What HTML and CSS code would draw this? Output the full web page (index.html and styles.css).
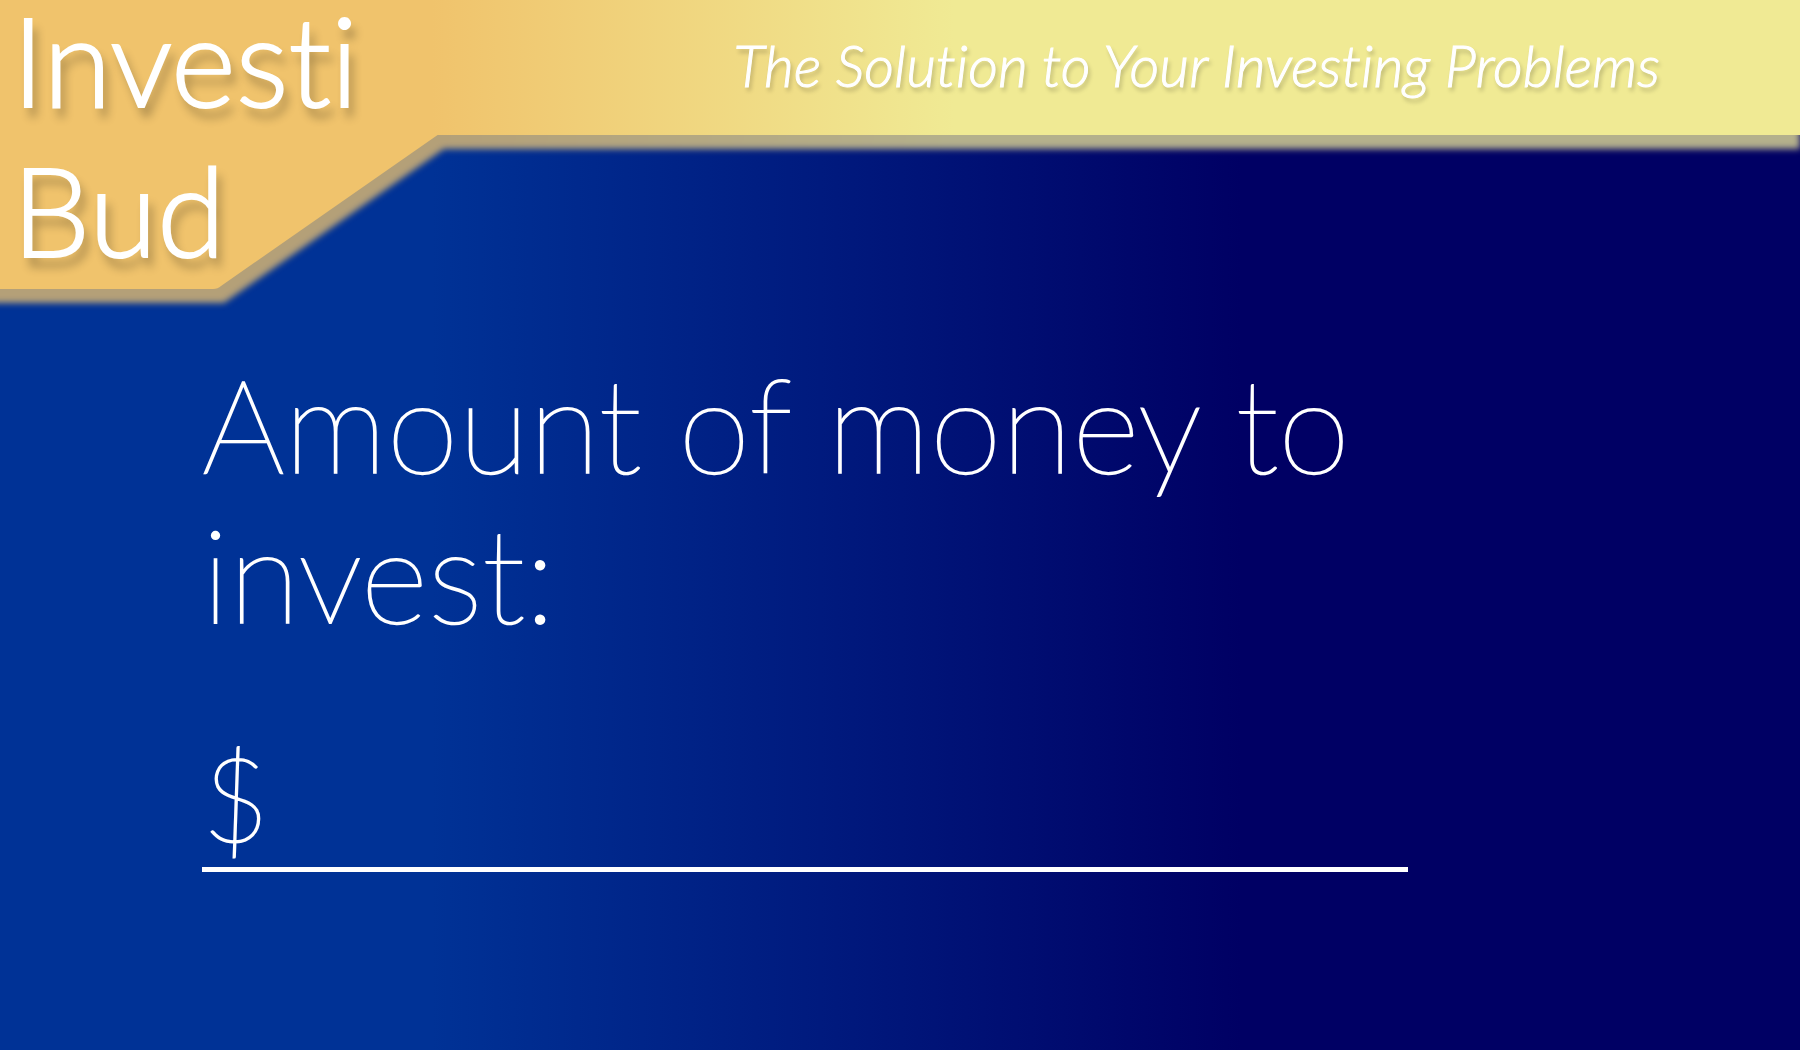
FILE: index.html
```html
<!DOCTYPE html>
<html lang="en">
<head>
<meta charset="utf-8">
<title>Investi Bud</title>
<link rel="stylesheet" href="styles.css">
</head>
<body>
<header class="banner">
  <svg class="banner-shape" width="100%" height="320" aria-hidden="true">
    <defs>
      <linearGradient id="gold" x1="0" y1="0" x2="1" y2="0">
        <stop offset="0.24" stop-color="#f0c36c"/>
        <stop offset="0.53" stop-color="#f0ea94"/>
      </linearGradient>
      <linearGradient id="shade" x1="0" y1="0" x2="1" y2="0">
        <stop offset="0.24" stop-color="#b4a078"/>
        <stop offset="0.53" stop-color="#b4b08c"/>
      </linearGradient>
    </defs>
    <g class="banner-shadow">
      <rect y="14" width="100%" height="135" fill="url(#shade)"/>
      <path d="M-20 14H444V149L224 303H-20Z" fill="#b4a078"/>
    </g>
    <rect width="100%" height="135" fill="url(#gold)"/>
    <path d="M0 134H439L221 286Q218 289 213 289H0Z" fill="#f0c36c"/>
  </svg>
  <h1 class="brand">Investi<br>Bud</h1>
  <p class="tagline">The Solution to Your Investing Problems</p>
</header>
<main class="amount">
  <label class="amount-label" for="amount">Amount of money to invest:</label>
  <input class="amount-input" id="amount" type="text" value="$">
</main>
</body>
</html>
```
FILE: styles.css
```css
* {
  box-sizing: border-box;
}

body {
  margin: 0;
  min-height: 100vh;
  color: #fff;
  font-family: Lato, "Open Sans", sans-serif;
  font-variant-ligatures: none;
  background: linear-gradient(90deg, #003296 24%, #000064 69%);
}

.banner {
  position: relative;
  display: flex;
  justify-content: space-between;
  align-items: flex-start;
  height: 308px;
  padding: 0 140px 0 12px;
}

.banner-shape {
  position: absolute;
  inset: 0;
  z-index: -1;
}

.banner-shadow {
  filter: blur(3px);
}

.brand {
  margin: -16px 0 0;
  font-size: 124px;
  font-weight: 300;
  line-height: 150px;
  -webkit-text-stroke: 2px #fff;
  text-shadow: 5px 10px 10px rgba(0, 0, 0, 0.3);
}

.tagline {
  margin: 33px 0 0;
  font-size: 58px;
  font-style: italic;
  font-weight: 300;
  line-height: 64px;
  -webkit-text-stroke: 1px #fff;
  text-shadow: 2px 4px 4px rgba(0, 0, 0, 0.25);
}

.amount {
  display: flex;
  flex-direction: column;
  width: 67%;
  margin-left: 202px;
  padding-top: 40px;
  font-weight: 100;
  -webkit-text-stroke: 2px #fff;
}

.amount-label {
  font-size: 130px;
  line-height: 150px;
}

.amount-input {
  width: 100%;
  height: 144px;
  margin-top: 80px;
  padding: 0;
  border: 0;
  border-bottom: 5px solid #fff;
  outline: 0;
  background: none;
  color: inherit;
  font: inherit;
  font-size: 116px;
}
```
